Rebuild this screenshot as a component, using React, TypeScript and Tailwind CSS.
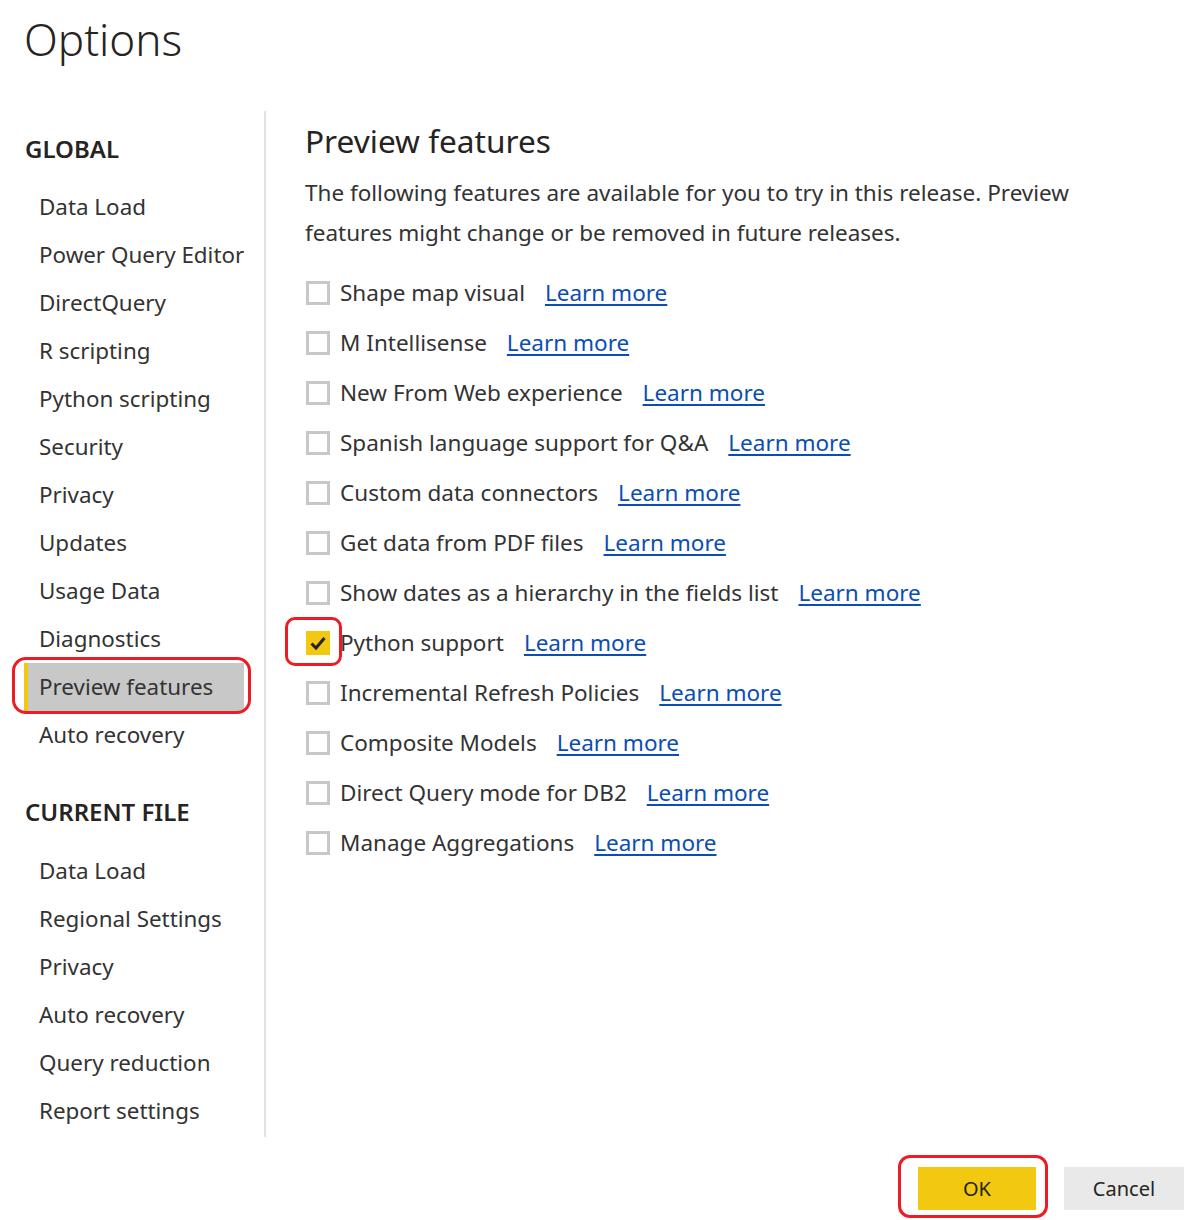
import React from "react";

const globalItems = [
  "Data Load",
  "Power Query Editor",
  "DirectQuery",
  "R scripting",
  "Python scripting",
  "Security",
  "Privacy",
  "Updates",
  "Usage Data",
  "Diagnostics",
  "Preview features",
  "Auto recovery",
];

const fileItems = ["Data Load", "Regional Settings", "Privacy", "Auto recovery", "Query reduction", "Report settings"];

const features = [
  { label: "Shape map visual", checked: false },
  { label: "M Intellisense", checked: false },
  { label: "New From Web experience", checked: false },
  { label: "Spanish language support for Q&A", checked: false },
  { label: "Custom data connectors", checked: false },
  { label: "Get data from PDF files", checked: false },
  { label: "Show dates as a hierarchy in the fields list", checked: false },
  { label: "Python support", checked: true },
  { label: "Incremental Refresh Policies", checked: false },
  { label: "Composite Models", checked: false },
  { label: "Direct Query mode for DB2", checked: false },
  { label: "Manage Aggregations", checked: false },
];

function NavItem({ label, active }: { label: string; active?: boolean }) {
  return (
    <div
      className={
        "h-[48px] flex items-center whitespace-nowrap text-[22.4px] text-[#333333] ml-[24px] mr-[20px] " +
        (active ? "bg-[#c8c8c8] border-l-4 border-[#f2c811] pl-[11px]" : "pl-[15px]")
      }
    >
      {label}
    </div>
  );
}

function Checkbox({ checked }: { checked: boolean }) {
  if (checked) {
    return (
      <div className="w-[24px] h-[24px] bg-[#f2c811] flex items-center justify-center shrink-0">
        <svg width="20" height="20" viewBox="0 0 20 20">
          <path d="M3.5 10.5 L8 15 L16.5 5" fill="none" stroke="#252423" strokeWidth="3" />
        </svg>
      </div>
    );
  }
  return <div className="w-[24px] h-[24px] border-[3px] border-[#c8c8c8] bg-white shrink-0" />;
}

export default function App() {
  return (
    <div className="relative w-[1196px] h-[1220px] bg-white text-[#333333] font-['Noto_Sans',sans-serif] overflow-hidden">
      <div className="pl-[24px] pt-[8px] h-[111px] text-[44px] font-light text-[#252423] leading-[62px]">Options</div>

      <div className="flex">
        {/* sidebar */}
        <div className="w-[266px] h-[1026px] border-r-2 border-[#e1e1e1] pt-[14px]">
          <div className="h-[48px] flex items-center pl-[25px] text-[24px] font-semibold text-[#252423]">GLOBAL</div>
          <div className="mt-[10px]">
            {globalItems.map((item) => (
              <NavItem key={item} label={item} active={item === "Preview features"} />
            ))}
          </div>
          <div className="mt-[29px] h-[48px] flex items-center pl-[25px] text-[24px] font-semibold text-[#252423]">
            CURRENT FILE
          </div>
          <div className="mt-[11px]">
            {fileItems.map((item) => (
              <NavItem key={item} label={item} />
            ))}
          </div>
        </div>

        {/* content */}
        <div className="flex-1 pl-[39px] pt-[10px]">
          <div className="h-[40px] flex items-center text-[31.6px] text-[#252423]">Preview features</div>
          <div className="mt-[12px] text-[22.5px] leading-[40px] text-[#333333]">
            The following features are available for you to try in this release. Preview
            <br />
            features might change or be removed in future releases.
          </div>
          <div className="mt-[15px]">
            {features.map((f) => (
              <div key={f.label} className="h-[50px] flex items-center pl-[1px]">
                <Checkbox checked={f.checked} />
                <span className="ml-[10px] text-[22.5px] text-[#333333]">{f.label}</span>
                <a className="ml-[20px] text-[22.5px] text-[#0b4db5] underline underline-offset-[3px] decoration-2">
                  Learn more
                </a>
              </div>
            ))}
          </div>
        </div>
      </div>

      <div className="absolute right-[12px] bottom-[10px] flex gap-[28px]">
        <button className="w-[118px] h-[43px] bg-[#f2c811] text-[20px] text-[#252423]">OK</button>
        <button className="w-[120px] h-[43px] bg-[#e9e9e9] text-[20px] text-[#252423]">Cancel</button>
      </div>

      {/* annotation outlines */}
      <div className="absolute left-[12px] top-[657px] w-[239px] h-[57px] border-[3px] border-[#ed1c24] rounded-[14px]" />
      <div className="absolute left-[285px] top-[617px] w-[57px] h-[49px] border-[3px] border-[#ed1c24] rounded-[10px]" />
      <div className="absolute left-[898px] top-[1155px] w-[150px] h-[63px] border-[3px] border-[#ed1c24] rounded-[12px]" />
    </div>
  );
}
